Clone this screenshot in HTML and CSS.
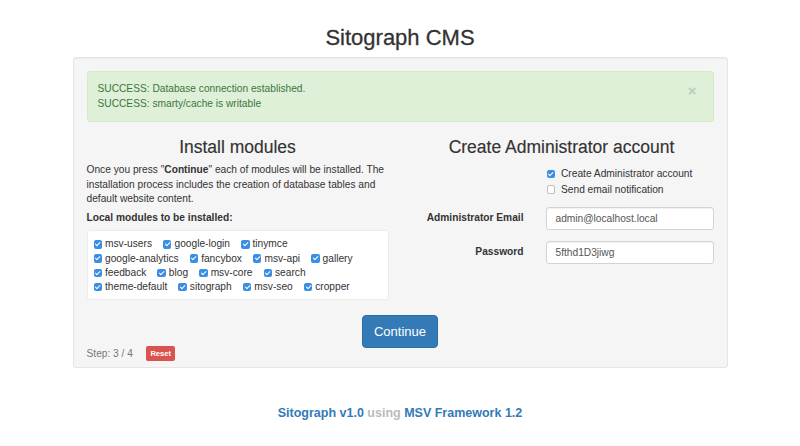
FILE: index.html
```html
<!DOCTYPE html>
<html>
<head>
<meta charset="utf-8">
<title>Sitograph CMS</title>
<link rel="stylesheet" href="styles.css">
</head>
<body>
<h1 class="title">Sitograph CMS</h1>
<div class="well">
  <div class="alert">
    <div class="alert-text">
      <div>SUCCESS: Database connection established.</div>
      <div>SUCCESS: smarty/cache is writable</div>
    </div>
    <span class="close">×</span>
  </div>
  <div class="cols">
    <div class="col">
      <h3 class="heading">Install modules</h3>
      <p class="intro">Once you press "<b>Continue</b>" each of modules will be installed. The<br>installation process includes the creation of database tables and<br>default website content.</p>
      <div class="list-label">Local modules to be installed:</div>
      <div class="modules">
        <div class="mrow">
          <span class="mod"><span class="cb"></span>msv-users</span>
          <span class="mod"><span class="cb"></span>google-login</span>
          <span class="mod"><span class="cb"></span>tinymce</span>
        </div>
        <div class="mrow">
          <span class="mod"><span class="cb"></span>google-analytics</span>
          <span class="mod"><span class="cb"></span>fancybox</span>
          <span class="mod"><span class="cb"></span>msv-api</span>
          <span class="mod"><span class="cb"></span>gallery</span>
        </div>
        <div class="mrow">
          <span class="mod"><span class="cb"></span>feedback</span>
          <span class="mod"><span class="cb"></span>blog</span>
          <span class="mod"><span class="cb"></span>msv-core</span>
          <span class="mod"><span class="cb"></span>search</span>
        </div>
        <div class="mrow">
          <span class="mod"><span class="cb"></span>theme-default</span>
          <span class="mod"><span class="cb"></span>sitograph</span>
          <span class="mod"><span class="cb"></span>msv-seo</span>
          <span class="mod"><span class="cb"></span>cropper</span>
        </div>
      </div>
    </div>
    <div class="col">
      <h3 class="heading">Create Administrator account</h3>
      <div class="form">
        <div></div>
        <div class="checks">
          <div class="check"><span class="cb"></span>Create Administrator account</div>
          <div class="check"><span class="cb off"></span>Send email notification</div>
        </div>
        <label class="flabel">Administrator Email</label>
        <div class="input">admin@localhost.local</div>
        <label class="flabel">Password</label>
        <div class="input">5fthd1D3jiwg</div>
      </div>
    </div>
  </div>
  <div class="actions">
    <button class="btn">Continue</button>
  </div>
  <div class="step">
    <span>Step: 3 / 4</span>
    <span class="reset">Reset</span>
  </div>
</div>
<div class="footer">
  <a class="link">Sitograph v1.0</a> <span class="using">using</span> <a class="link">MSV Framework 1.2</a>
</div>
</body>
</html>
```
FILE: styles.css
```css
* { box-sizing: border-box; }
html, body { margin: 0; padding: 0; background: #fff; }
body {
  font-family: "Liberation Sans", Arial, sans-serif;
  font-size: 10.2px;
  line-height: 14.6px;
  color: #333;
}
.title {
  margin: 26px 0 0;
  height: 31px;
  font-size: 22px;
  line-height: 24px;
  font-weight: normal;
  text-align: center;
  color: #333;
  -webkit-text-stroke: 0.3px #333;
}
.well {
  width: 655px;
  margin: 0 auto;
  background: #f5f5f5;
  border: 1px solid #e5e5e5;
  border-radius: 3px;
  padding: 13px 13px 6px;
  box-shadow: inset 0 1px 1px rgba(0,0,0,0.04);
}
.alert {
  display: flex;
  justify-content: space-between;
  background: #dff0d8;
  border: 1px solid #d6e9c6;
  border-radius: 3px;
  color: #3c763d;
  padding: 10px 10px 10px 10px;
  height: 51px;
}
.close {
  font-size: 15px;
  font-weight: bold;
  color: #000;
  opacity: 0.15;
  line-height: 18px;
  margin-right: 6px;
}
.cols {
  display: grid;
  grid-template-columns: 302px 302px;
  column-gap: 22px;
  margin-top: 16px;
}
.heading {
  margin: 0 0 6px;
  font-size: 17.5px;
  line-height: 19px;
  font-weight: normal;
  text-align: center;
  color: #333;
  -webkit-text-stroke: 0.15px #333;
}
.intro { margin: 0 0 4px; white-space: nowrap; }
.list-label { font-weight: bold; margin-bottom: 5px; }
.modules {
  background: #fff;
  border: 1px solid #ececec;
  border-radius: 3px;
  padding: 6px 6px 6px 6px;
  height: 70px;
}
.mrow { display: flex; gap: 11px; line-height: 14.2px; }
.mod { display: inline-flex; align-items: center; gap: 3px; white-space: nowrap; }
.cb {
  display: inline-block;
  position: relative;
  width: 8.5px;
  height: 8.5px;
  border-radius: 2px;
  background: #3a8ee6;
  flex: none;
}
.cb::after {
  content: "";
  position: absolute;
  left: 2.8px;
  top: 1px;
  width: 2.2px;
  height: 4.4px;
  border: solid #fff;
  border-width: 0 1.3px 1.3px 0;
  transform: rotate(45deg);
}
.cb.off { background: #fff; border: 1px solid #bdbdbd; }
.cb.off::after { display: none; }
.form {
  display: grid;
  grid-template-columns: 113px 168px;
  column-gap: 22px;
  row-gap: 11px;
  align-items: center;
}
.checks { margin-top: 3px; margin-bottom: -1px; }
.check { display: flex; align-items: center; gap: 6px; line-height: 15.5px; padding-left: 1px; }
.flabel { font-weight: bold; text-align: right; }
.input {
  height: 23px;
  background: #fff;
  border: 1px solid #d4d4d4;
  border-radius: 3px;
  padding: 0 9px;
  line-height: 21px;
  color: #555;
  box-shadow: inset 0 1px 1px rgba(0,0,0,0.06);
}
.actions { display: flex; justify-content: center; margin-top: 15px; }
.btn {
  width: 76px;
  height: 33px;
  background: #337ab7;
  border: 1px solid #2e6da4;
  border-radius: 4px;
  color: #fff;
  font-family: "Liberation Sans", Arial, sans-serif;
  font-size: 13px;
  padding: 0;
}
.step {
  display: flex;
  align-items: center;
  gap: 13px;
  margin-top: -2px;
  color: #777;
  height: 15px;
}
.reset {
  background: #d9534f;
  color: #fff;
  font-weight: bold;
  font-size: 7.5px;
  line-height: 15px;
  height: 15px;
  padding: 0 4.5px;
  border-radius: 2px;
}
.footer {
  text-align: center;
  margin-top: 37px;
  font-size: 12.5px;
  font-weight: bold;
  line-height: 16px;
}
.link { color: #337ab7; text-decoration: none; }
.using { color: #bbb; }
```
